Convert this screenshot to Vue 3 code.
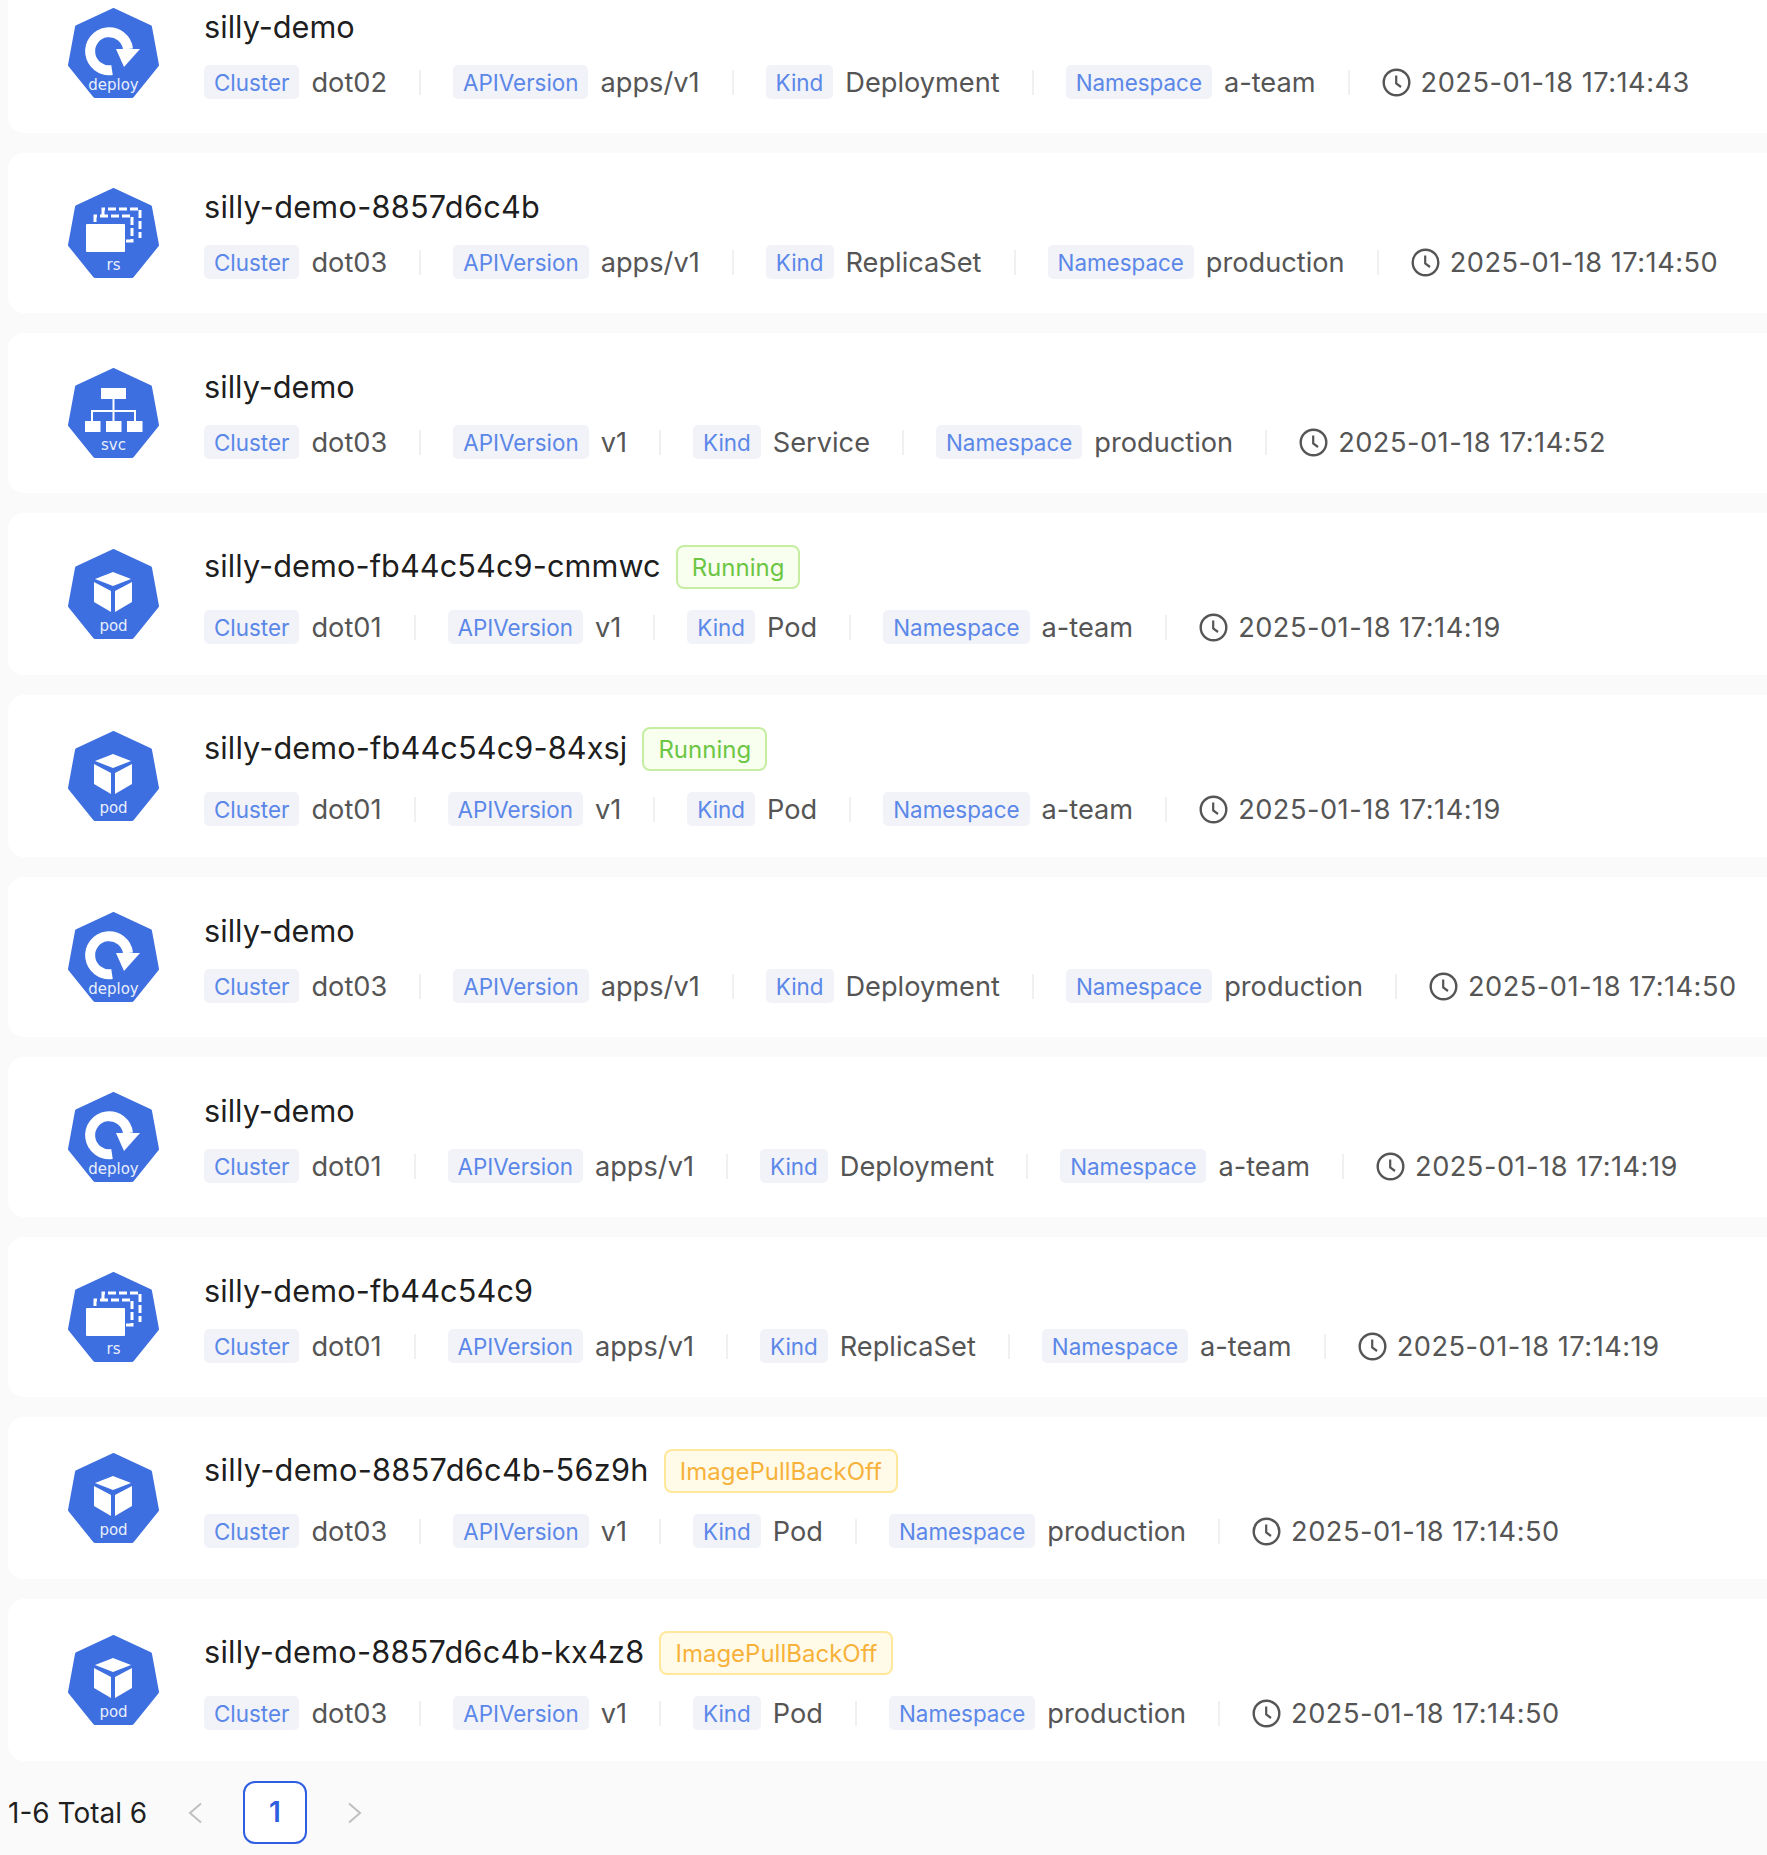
<template>
  <div class="page">
    <div class="list">
      <div v-for="(item, i) in items" :key="i" class="card" :class="{ tagged: item.status }">
        <svg class="kind-icon" viewBox="0 0 91 91" width="91" height="91">
          <path class="hex" d="M45.5 2 L82 19 L89 57 L64 88 L27 88 L2 57 L9 19 Z" />
          <template v-if="item.icon === 'deploy'">
            <path d="M44 62 A19 19 0 1 1 60 41" fill="none" stroke="#fff" stroke-width="10" />
            <path d="M48 41 L72 41 L56 59 Z" fill="#fff" />
          </template>
          <template v-else-if="item.icon === 'rs'">
            <path d="M35 27 V21 H72 V50" fill="none" stroke="#fff" stroke-width="3" stroke-dasharray="8 3" />
            <path d="M27 34 V28 H64 V53 H58" fill="none" stroke="#fff" stroke-width="3" stroke-dasharray="8 3" />
            <rect x="18" y="36" width="39" height="28" rx="1" fill="#fff" />
          </template>
          <template v-else-if="item.icon === 'svc'">
            <rect x="33" y="20" width="25" height="11" fill="#fff" />
            <path d="M45.5 31 V53 M24 53 V43 H67 V53" fill="none" stroke="#fff" stroke-width="2" />
            <rect x="17" y="53" width="15.5" height="11" fill="#fff" />
            <rect x="38" y="53" width="15.5" height="11" fill="#fff" />
            <rect x="59" y="53" width="15.5" height="11" fill="#fff" />
          </template>
          <template v-else>
            <path d="M45 23 L63 30 L45 37 L27 30 Z" fill="#fff" />
            <path d="M26 33 L43 42 V63 L26 53 Z" fill="#fff" />
            <path d="M47 42 L64 33 V53 L47 63 Z" fill="#fff" />
          </template>
          <text x="45.5" y="82" class="icon-label">{{ item.icon }}</text>
        </svg>

        <div class="info">
          <div class="title-row">
            <span class="title" :style="{ letterSpacing: titleSpacing(item.name) }">{{ item.name }}</span>
            <span v-if="item.status" class="status" :class="item.status === 'Running' ? 'ok' : 'warn'">{{ item.status }}</span>
          </div>
          <div class="meta">
            <span class="label">Cluster</span>
            <span class="value">{{ item.cluster }}</span>
            <i class="divider"></i>
            <span class="label">APIVersion</span>
            <span class="value">{{ item.api }}</span>
            <i class="divider"></i>
            <span class="label">Kind</span>
            <span class="value">{{ item.kind }}</span>
            <i class="divider"></i>
            <span class="label">Namespace</span>
            <span class="value">{{ item.ns }}</span>
            <i class="divider"></i>
            <svg class="clock" viewBox="0 0 29 29" width="29" height="29" fill="none" stroke="#555" stroke-width="2.4">
              <circle cx="14.5" cy="14.5" r="12.8" />
              <path d="M14.2 7.5 V15.5 L19 19" stroke-width="2.2" />
            </svg>
            <span class="value time">{{ item.time }}</span>
          </div>
        </div>
      </div>
    </div>

    <div class="pager">
      <span class="total">1-6 Total 6</span>
      <svg class="arrow" viewBox="0 0 14 22" width="14" height="22"><path d="M13 1.5 L2 11 L13 20.5" /></svg>
      <span class="current">1</span>
      <svg class="arrow" viewBox="0 0 14 22" width="14" height="22"><path d="M1 1.5 L12 11 L1 20.5" /></svg>
    </div>
  </div>
</template>

<script setup>
const items = [
  { icon: 'deploy', name: 'silly-demo', cluster: 'dot02', api: 'apps/v1', kind: 'Deployment', ns: 'a-team', time: '2025-01-18 17:14:43' },
  { icon: 'rs', name: 'silly-demo-8857d6c4b', cluster: 'dot03', api: 'apps/v1', kind: 'ReplicaSet', ns: 'production', time: '2025-01-18 17:14:50' },
  { icon: 'svc', name: 'silly-demo', cluster: 'dot03', api: 'v1', kind: 'Service', ns: 'production', time: '2025-01-18 17:14:52' },
  { icon: 'pod', name: 'silly-demo-fb44c54c9-cmmwc', status: 'Running', cluster: 'dot01', api: 'v1', kind: 'Pod', ns: 'a-team', time: '2025-01-18 17:14:19' },
  { icon: 'pod', name: 'silly-demo-fb44c54c9-84xsj', status: 'Running', cluster: 'dot01', api: 'v1', kind: 'Pod', ns: 'a-team', time: '2025-01-18 17:14:19' },
  { icon: 'deploy', name: 'silly-demo', cluster: 'dot03', api: 'apps/v1', kind: 'Deployment', ns: 'production', time: '2025-01-18 17:14:50' },
  { icon: 'deploy', name: 'silly-demo', cluster: 'dot01', api: 'apps/v1', kind: 'Deployment', ns: 'a-team', time: '2025-01-18 17:14:19' },
  { icon: 'rs', name: 'silly-demo-fb44c54c9', cluster: 'dot01', api: 'apps/v1', kind: 'ReplicaSet', ns: 'a-team', time: '2025-01-18 17:14:19' },
  { icon: 'pod', name: 'silly-demo-8857d6c4b-56z9h', status: 'ImagePullBackOff', cluster: 'dot03', api: 'v1', kind: 'Pod', ns: 'production', time: '2025-01-18 17:14:50' },
  { icon: 'pod', name: 'silly-demo-8857d6c4b-kx4z8', status: 'ImagePullBackOff', cluster: 'dot03', api: 'v1', kind: 'Pod', ns: 'production', time: '2025-01-18 17:14:50' },
]

// the installed Inter has narrower high digits than the original font
function titleSpacing(name) {
  const wide = (name.match(/[5-9]/g) || []).length
  return `${(wide * 0.95) / name.length}px`
}
</script>

<style>
html, body {
  margin: 0;
  background: #fafafa;
}
</style>

<style scoped>
.page {
  height: 1855px;
  overflow: hidden;
  background: #fafafa;
  font-family: Inter, "Liberation Sans", sans-serif;
}

.list {
  display: flex;
  flex-direction: column;
  gap: 20px;
  margin: -27px -30px 0 8px;
}

.card {
  display: flex;
  align-items: center;
  gap: 45px;
  padding: 34px 0 34px 60px;
  background: #fff;
  border-radius: 16px;
}

.card.tagged {
  padding: 31px 0 31px 60px;
}

.kind-icon {
  flex-shrink: 0;
}

.hex {
  fill: #3d6fe0;
  stroke: #3d6fe0;
  stroke-width: 4;
  stroke-linejoin: round;
}

.icon-label {
  font-family: "DejaVu Sans", sans-serif;
  font-size: 15px;
  fill: #e8eefc;
  text-anchor: middle;
}

.title-row {
  display: flex;
  align-items: center;
  gap: 15px;
  height: 40px;
  margin-bottom: 18px;
}

.tagged .title-row {
  height: 44px;
  margin-bottom: 22px;
}

.title {
  font-size: 30.7px;
  color: rgba(0, 0, 0, 0.9);
  position: relative;
  top: -1px;
}

.status {
  box-sizing: border-box;
  height: 44px;
  line-height: 42px;
  margin-top: 2px;
  padding: 0 14px;
  border: 2px solid;
  border-radius: 8px;
  font-size: 24px;
}

.status.ok {
  color: #6cc644;
  background: #f8ffef;
  border-color: #c6eea0;
}

.status.warn {
  color: #f7b23b;
  background: #fffbe8;
  border-color: #ffe89c;
}

.meta {
  display: flex;
  align-items: center;
  height: 34px;
  white-space: nowrap;
}

.label {
  height: 34px;
  line-height: 35px;
  padding: 0 10px;
  margin-right: 12px;
  border-radius: 5px;
  background: #f1f3f8;
  color: #5b87e8;
  font-size: 22.4px;
}

.value {
  font-size: 27.2px;
  line-height: 36px;
  padding-top: 1px;
  color: #555;
}

.time {
  letter-spacing: 0.5px;
}

.divider {
  width: 2px;
  height: 25px;
  margin: 0 32px;
  background: #f0f0f0;
}

.clock {
  flex-shrink: 0;
  margin-right: 10px;
}

.pager {
  display: flex;
  align-items: center;
  margin: 20px 0 0 8px;
  height: 63px;
}

.total {
  font-size: 28px;
  color: rgba(0, 0, 0, 0.88);
  width: 180px;
}

.arrow {
  fill: none;
  stroke: #bfbfbf;
  stroke-width: 2;
}

.current {
  box-sizing: border-box;
  width: 64px;
  height: 63px;
  line-height: 59px;
  margin: 0 41px;
  text-align: center;
  background: #fff;
  border: 2px solid #2f5fe0;
  border-radius: 12px;
  color: #2f5fe0;
  font-size: 28px;
  font-weight: 600;
}
</style>
